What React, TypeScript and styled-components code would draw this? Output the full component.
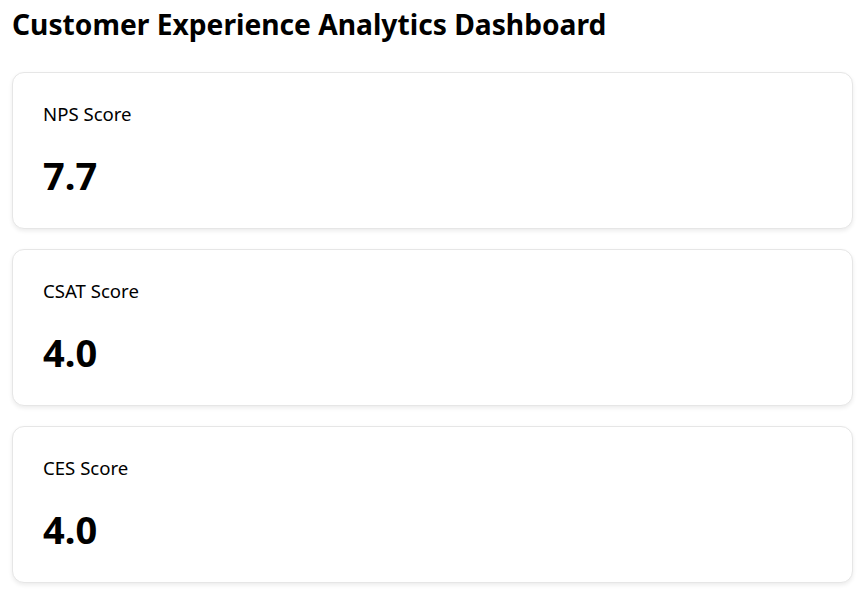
import React from "react";
import styled, { createGlobalStyle } from "styled-components";

const GlobalStyle = createGlobalStyle`
  html, body { margin: 0; padding: 0; background: #ffffff; }
  body { font-family: "Noto Sans", "Open Sans", sans-serif; color: #000; }
`;

const Page = styled.div`
  padding: 0 9px 16px 12px;
  display: flex;
  flex-direction: column;
`;

const Title = styled.h1`
  margin: 0;
  padding-top: 4px;
  font-size: 28.2px;
  line-height: 40px;
  font-weight: 700;
  color: #000;
  height: 68px;
`;

const CardList = styled.div`
  display: flex;
  flex-direction: column;
  gap: 20px;
`;

const Card = styled.div`
  box-sizing: border-box;
  height: 157px;
  border: 1px solid #e6e6e6;
  border-radius: 12px;
  box-shadow: 0 2px 4px rgba(0, 0, 0, 0.08);
  padding: 29px 30px;
  display: flex;
  flex-direction: column;
  background: #fff;
`;

const Label = styled.div`
  font-size: 18.6px;
  line-height: 24px;
  color: #000;
`;

const Value = styled.div`
  margin-top: 25px;
  font-size: 38px;
  line-height: 48px;
  font-weight: 700;
  color: #000;
`;

const metrics = [
  { label: "NPS Score", value: "7.7" },
  { label: "CSAT Score", value: "4.0" },
  { label: "CES Score", value: "4.0" },
];

export default function App() {
  return (
    <>
      <GlobalStyle />
      <Page>
        <Title>Customer Experience Analytics Dashboard</Title>
        <CardList>
          {metrics.map((m) => (
            <Card key={m.label}>
              <Label>{m.label}</Label>
              <Value>{m.value}</Value>
            </Card>
          ))}
        </CardList>
      </Page>
    </>
  );
}
